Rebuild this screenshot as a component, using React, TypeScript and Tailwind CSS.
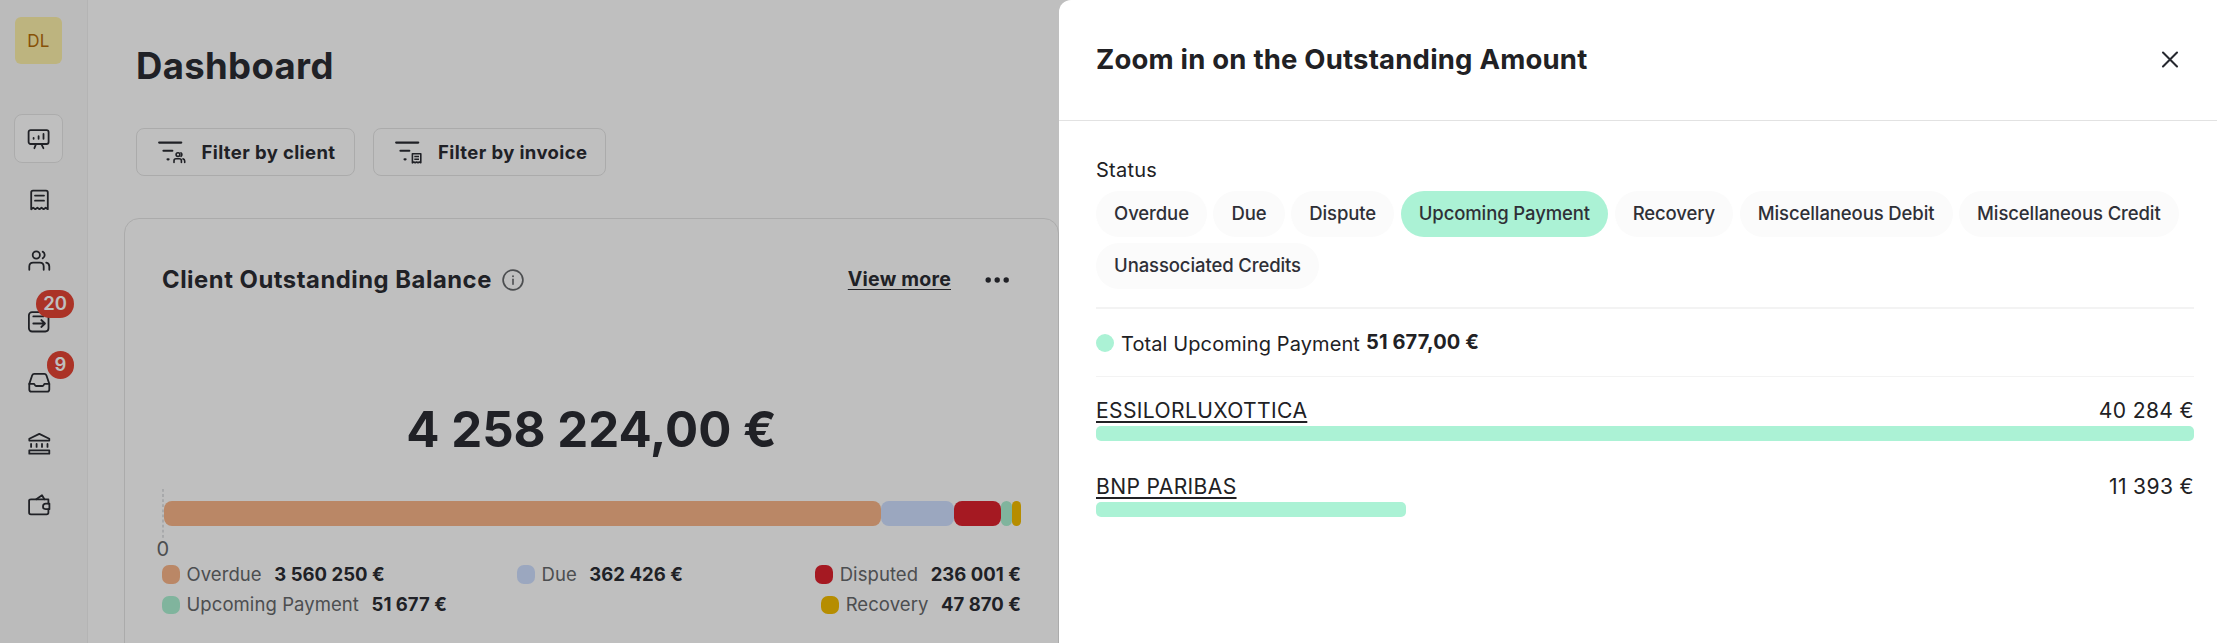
import type { ReactNode } from "react";

function Glyph({ children }: { children: ReactNode }) {
  return (
    <svg
      width="24"
      height="24"
      viewBox="0 0 24 24"
      fill="none"
      stroke="currentColor"
      strokeWidth="1.8"
      strokeLinecap="round"
      strokeLinejoin="round"
    >
      {children}
    </svg>
  );
}

const BoardIcon = () => (
  <Glyph>
    <rect x="1.6" y="3.1" width="20" height="13.9" rx="2" />
    <path d="M6.6 10.9v.9M11.6 9.2v2.6M16.5 6.9v4.9M9 17.2 7.4 21.2M14.4 17.2l2 4" />
  </Glyph>
);

const ReceiptIcon = () => (
  <Glyph>
    <path d="M4.2 21.2V4.4a1.8 1.8 0 0 1 1.8-1.8h13a1.8 1.8 0 0 1 1.8 1.8v16.8l-2.1-1.5-2.1 1.5-2.1-1.5-2 1.5-2.1-1.5-2.1 1.5-2.1-1.5z" />
    <path d="M8 7.6h9M8 12.7h9" />
  </Glyph>
);

const UsersIcon = () => (
  <Glyph>
    <circle cx="9.3" cy="6" r="3.6" />
    <path d="M15.7 2.6c1.3.7 2 1.9 2 3.4s-.7 2.7-2 3.4" />
    <path d="M2.3 20.8v-3.3c0-2.4 1.4-3.9 3.8-3.9h6.8c2.4 0 3.8 1.5 3.8 3.9v3.3M19.2 13.6c2 .3 3.1 1.7 3.1 3.9v3.3" />
  </Glyph>
);

const TransferIcon = () => (
  <Glyph>
    <rect x="1.9" y="2.1" width="19.6" height="19.4" rx="3.2" />
    <path d="M6.3 6.4h10M6.3 13.5h11.6M14.3 10l3.7 3.5-3.7 3.5" />
  </Glyph>
);

const InboxIcon = () => (
  <Glyph>
    <path d="M2.3 12.9 5.2 4.3c.4-1 .9-1.4 2-1.4h10.2c1.1 0 1.6.4 2 1.4l2.9 8.6v5.6c0 1.5-.7 2.2-2.2 2.2H4.5c-1.5 0-2.2-.7-2.2-2.2z" />
    <path d="M2.3 12.9h4.6c.9 0 .9 2.1 2.2 2.1h6.4c1.3 0 1.3-2.1 2.2-2.1h4.6" />
  </Glyph>
);

const BankIcon = () => (
  <Glyph>
    <path d="M2.3 8.6V6.7l10-4.8 10 4.8v1.9zM2.3 18.3h20v3.4h-20zM4.1 12v2.9M9.6 12v2.9M15 12v2.9M20.5 12v2.9" />
  </Glyph>
);

const WalletIcon = () => (
  <Glyph>
    <path d="M21.4 10.6V6.4H4c-1.2 0-1.9.1-1.9.9v12.3c0 1.2.6 1.8 1.8 1.8h15.7c1.2 0 1.8-.6 1.8-1.8v-3.4" />
    <path d="M9.3 6.2 15 2.2l2.4 4M22.4 10.6h-3.6a2.8 2.8 0 0 0 0 5.6h3.6z" />
  </Glyph>
);

const NAV: { icon: () => ReactNode; active?: boolean; badge?: string }[] = [
  { icon: BoardIcon, active: true },
  { icon: ReceiptIcon },
  { icon: UsersIcon },
  { icon: TransferIcon, badge: "20" },
  { icon: InboxIcon, badge: "9" },
  { icon: BankIcon },
  { icon: WalletIcon },
];

function Sidebar() {
  return (
    <aside className="flex w-[88px] shrink-0 flex-col border-r border-[#f1f1f1] bg-[#fafafa] pl-[14px]">
      <div className="ml-px mt-[17px] flex size-[47px] items-center justify-center rounded-[6px] bg-[#fdf0aa] pt-[2px] text-[17px] tracking-[0.3px] text-[#b46d09]">
        DL
      </div>
      <nav className="mt-[50px] flex flex-col gap-[12px]">
        {NAV.map(({ icon: Icon, active, badge }, i) => (
          <div
            key={i}
            className={
              active
                ? "relative flex size-[49px] items-center justify-center rounded-[8px] border border-[#e6e6e6] bg-white"
                : "relative flex size-[49px] items-center justify-center"
            }
          >
            <Icon />
            {badge && (
              <span className="absolute right-[-11px] top-[-7px] flex h-[28px] min-w-[27px] items-center justify-center rounded-full bg-[#e44435] px-[7px] text-[18.5px] font-semibold text-white">
                {badge}
              </span>
            )}
          </div>
        ))}
      </nav>
    </aside>
  );
}

function FilterLines() {
  return (
    <g strokeLinecap="round">
      <path d="M1.2 2.6h22" strokeWidth="2.3" />
      <path d="M5.4 10.8h9" strokeWidth="2" />
      <path d="M9.6 19.3h.9" strokeWidth="2.3" />
    </g>
  );
}

const FilterClientIcon = () => (
  <svg width="30" height="26" viewBox="0 0 30 26" fill="none" stroke="currentColor">
    <FilterLines />
    <g strokeWidth="1.6" strokeLinecap="round">
      <circle cx="20" cy="14.6" r="1.9" />
      <path d="M23 12.8c1.2.8 1.2 2.8 0 3.6M16 22.4v-1.6c0-1.3.8-2 2-2h3.4c1.2 0 2 .7 2 2v1.6M25 18.9c1.1.2 1.7.9 1.7 2v1.5" />
    </g>
  </svg>
);

const FilterInvoiceIcon = () => (
  <svg width="30" height="26" viewBox="0 0 30 26" fill="none" stroke="currentColor">
    <FilterLines />
    <g strokeWidth="1.6" strokeLinejoin="round">
      <path d="M17.4 22.8v-9.1h8.4v9.1l-1.4-.8-1.4.8-1.4-.8-1.4.8-1.4-.8z" />
      <path d="M19.3 16.5h4.7M19.3 19.3h4.7" />
    </g>
  </svg>
);

function FilterButton({ icon, children }: { icon: ReactNode; children: ReactNode }) {
  return (
    <button className="flex h-[48px] items-center rounded-[8px] border border-[#e5e5e5] pl-[21px] pr-[18px] pt-px text-[18.5px] font-bold tracking-[0.39px]">
      <span className="mr-[13.5px] mt-px">{icon}</span>
      {children}
    </button>
  );
}

function Legend({ color, label, value }: { color: string; label: string; value: string }) {
  return (
    <div className="flex items-center">
      <span className={`mr-[6.5px] h-[18.5px] w-[18px] rounded-[7px] ${color}`} />
      <span className="mr-[12.5px] text-[18.5px] tracking-[0.08px] text-[#66686b]">{label}</span>
      <span className="text-[18.5px] font-bold tracking-[0.04px]">{value}</span>
    </div>
  );
}

const SEGMENTS = [
  { color: "bg-[#f8b588]", width: 717.3 },
  { color: "bg-[#cfdfff]", width: 72.7 },
  { color: "bg-[#dd222e]", width: 47 },
  { color: "bg-[#abf1d2]", width: 11 },
  { color: "bg-[#f3bc00]", width: 9 },
];

function BalanceCard() {
  return (
    <section className="ml-[36px] mt-[42px] h-[460px] w-[935px] shrink-0 rounded-[15px] border border-[#e5e5e5] pl-[37px] pr-[37px] pt-[40px]">
      <div className="flex h-[41px] items-center">
        <h2 className="text-[23.8px] font-bold tracking-[0.53px]">Client Outstanding Balance</h2>
        <svg className="ml-[10.5px]" width="22" height="22" viewBox="0 0 22 22" fill="none" stroke="#66686b" strokeLinecap="round">
          <circle cx="11" cy="11" r="9.9" strokeWidth="1.7" />
          <path d="M11 10.2v5" strokeWidth="1.6" />
          <path d="M11 7.1v.1" strokeWidth="1.9" />
        </svg>
        <a className="ml-auto pt-px text-[19.5px] font-bold tracking-[0.22px] underline decoration-[1.3px] underline-offset-[2.5px]">
          View more
        </a>
        <svg className="ml-[34px] mr-[12px]" width="24" height="8" viewBox="0 0 24 8" fill="currentColor">
          <circle cx="3.2" cy="4" r="2.7" />
          <circle cx="12.2" cy="4" r="2.7" />
          <circle cx="21.2" cy="4" r="2.7" />
        </svg>
      </div>
      <div className="mt-[99px] h-[60px] text-center text-[49.2px] font-bold leading-[60px]">4 258 224,00 €</div>
      <div className="mt-[30px] flex h-[49px] items-center">
        <svg className="self-start" width="2" height="51" viewBox="0 0 2 51">
          <path d="M1 0v51" stroke="#e0e2e4" strokeWidth="2" strokeDasharray="2.8 2.3" />
        </svg>
        {SEGMENTS.map((s) => (
          <div key={s.color} className={`h-[25px] shrink-0 rounded-[8px] ${s.color}`} style={{ width: s.width }} />
        ))}
      </div>
      <div className="ml-[-5.5px] h-[21px] text-[20px] leading-[22px] text-[#66686b]">0</div>
      <div className="flex h-[31px] items-center justify-between">
        <Legend color="bg-[#f8b588]" label="Overdue" value="3 560 250 €" />
        <Legend color="bg-[#cfdfff]" label="Due" value="362 426 €" />
        <Legend color="bg-[#dd222e]" label="Disputed" value="236 001 €" />
      </div>
      <div className="flex h-[30px] items-center justify-between">
        <Legend color="bg-[#abf1d2]" label="Upcoming Payment" value="51 677 €" />
        <Legend color="bg-[#f3bc00]" label="Recovery" value="47 870 €" />
      </div>
    </section>
  );
}

const STATUSES = [
  "Overdue",
  "Due",
  "Dispute",
  "Upcoming Payment",
  "Recovery",
  "Miscellaneous Debit",
  "Miscellaneous Credit",
  "Unassociated Credits",
];

const CLIENTS = [
  { name: "ESSILORLUXOTTICA", amount: "40 284 €", share: 100 },
  { name: "BNP PARIBAS", amount: "11 393 €", share: 28.23 },
];

function Drawer() {
  return (
    <aside className="absolute inset-y-0 right-0 w-[1158px] rounded-tl-[12px] bg-white text-[#212124]">
      <header className="flex h-[121px] items-center justify-between border-b border-[#e2e2e2] pl-[37px] pr-[38px]">
        <h2 className="mt-[-1px] text-[27.5px] font-bold tracking-[0.2px]">Zoom in on the Outstanding Amount</h2>
        <svg width="18" height="18" viewBox="0 0 18 18" fill="none" stroke="#26282f" strokeWidth="2.1" strokeLinecap="round">
          <path d="M2 1.5 16 15.5M16 1.5 2 15.5" />
        </svg>
      </header>
      <div className="pl-[37px] pr-[23px] pt-[34px]">
        <div className="text-[20px] leading-[30px] tracking-[0.25px]">Status</div>
        <div className="mt-[6px] flex flex-wrap gap-x-[6.5px] gap-y-[6px]">
          {STATUSES.map((s) => (
            <span
              key={s}
              className={`flex h-[46px] items-center rounded-full px-[18.1px] text-[18.5px] font-medium tracking-[-0.11px] text-[#2f3037] ${
                s === "Upcoming Payment" ? "bg-[#abf2d5]" : "bg-[#fbfbfb]"
              }`}
            >
              {s}
            </span>
          ))}
        </div>
        <div className="mt-[18px] flex h-[70px] items-center border-b border-t-2 border-b-[#f3f3f3] border-t-[#f3f3f3]">
          <span className="mr-[7px] size-[18px] rounded-full bg-[#abf2d5]" />
          <span className="mr-[6px] mt-[2px] text-[20px] tracking-[0.1px]">Total Upcoming Payment</span>
          <span className="mt-[-1px] text-[20px] font-bold tracking-[0.12px]">51 677,00 €</span>
        </div>
        <div className="flex flex-col gap-[32px] pt-[20px]">
          {CLIENTS.map((c) => (
            <div key={c.name}>
              <div className="flex justify-between text-[21.1px] leading-[28px] tracking-[0.35px]">
                <a className="underline decoration-2 underline-offset-[2.5px]">{c.name}</a>
                <span>{c.amount}</span>
              </div>
              <div className="mt-px h-[15px] rounded-[5px] bg-[#abf2d5]" style={{ width: `${c.share}%` }} />
            </div>
          ))}
        </div>
      </div>
    </aside>
  );
}

export default function App() {
  return (
    <div className="relative flex h-[643px] w-[2217px] overflow-hidden bg-white font-['Inter',sans-serif] text-[#2b2d33]">
      <Sidebar />
      <main className="flex min-w-0 flex-1 flex-col">
        <h1 className="ml-[48px] mt-[44px] text-[36.5px] font-bold leading-[44px] tracking-[0.35px]">Dashboard</h1>
        <div className="ml-[48px] mt-[40px] flex gap-[18px]">
          <FilterButton icon={<FilterClientIcon />}>Filter by client</FilterButton>
          <FilterButton icon={<FilterInvoiceIcon />}>Filter by invoice</FilterButton>
        </div>
        <BalanceCard />
      </main>
      <div className="absolute inset-0 bg-black/25" />
      <Drawer />
    </div>
  );
}
